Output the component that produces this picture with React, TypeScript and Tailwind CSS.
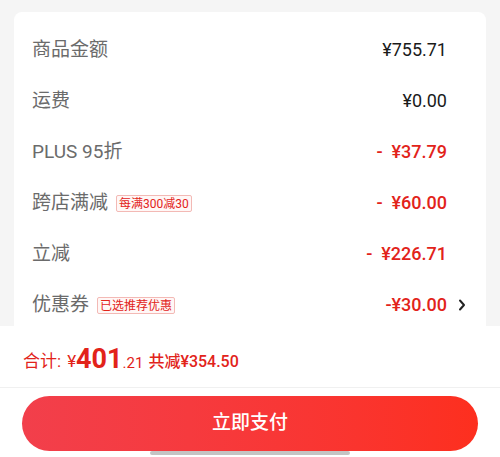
import React from "react"

const rows = [
  { label: "商品金额", value: "¥755.71", red: false },
  { label: "运费", value: "¥0.00", red: false },
  { label: "PLUS 95折", value: "-  ¥37.79", red: true },
  { label: "跨店满减", tag: "每满300减30", value: "-  ¥60.00", red: true },
  { label: "立减", value: "-  ¥226.71", red: true },
  { label: "优惠券", tag: "已选推荐优惠", value: "-¥30.00", red: true, arrow: true },
]

export default function App() {
  return (
    <div className="relative w-[500px] h-[457px] bg-[#f5f5f5] flex flex-col overflow-hidden font-['Roboto','Noto_Sans_CJK_SC',sans-serif]">
      {/* --- Price card --- */}
      <div className="flex-1 overflow-hidden pt-3 px-[14px]">
        <div className="bg-white rounded-lg pt-3 pl-[18px] pr-[18px] pb-4">
          {rows.map((r) => (
            <div key={r.label} className="h-[51px] flex items-center">
              <div className="flex items-center flex-1 pt-[2px]">
                <span className="text-[19px] text-[#6b6b6b]">{r.label}</span>
                {r.tag && (
                  <span className="ml-2 px-[2px] h-[17px] leading-[16px] text-[12px] text-[#e2231a] border border-[#f3b9b5] bg-[#fff7f6] rounded-[2px]">
                    {r.tag}
                  </span>
                )}
              </div>
              <span className={"text-[18px] whitespace-pre " + (r.red ? "text-[#e2231a] font-medium" : "text-[#1a1a1a]")}>
                {r.value}
              </span>
              <div className="w-[21px] flex items-center">
                {r.arrow && (
                  <svg width="8" height="12" viewBox="0 0 8 12" className="ml-[11px]">
                    <path d="M2 1.5 L6 6 L2 10.5" fill="none" stroke="#222" strokeWidth="2" strokeLinecap="round" strokeLinejoin="round" />
                  </svg>
                )}
              </div>
            </div>
          ))}
        </div>
      </div>

      {/* --- Bottom bar --- */}
      <div className="bg-white h-[131px] flex flex-col">
        <div className="h-[62px] flex items-end pb-[13px] pl-[23px] text-[#e2231a] border-b border-[#f0f0f0]">
          <span className="text-[17px]">合计:</span>
          <span className="text-[17px] ml-[6px]">¥</span>
          <span className="text-[27px] font-bold leading-[29px]">401</span>
          <span className="text-[15px]">.21</span>
          <span className="text-[16px] ml-[5px] font-medium">共减¥354.50</span>
        </div>
        <div className="px-[22px] pt-[8px]">
          <button className="w-full h-[55px] rounded-full bg-gradient-to-r from-[#f23f4b] to-[#fd2f1e] text-white text-[19px] font-medium">
            立即支付
          </button>
        </div>
      </div>

      {/* home indicator */}
      <div className="absolute left-[150px] top-[451px] w-[200px] h-[4px] rounded-full bg-[#c4c4c4]"></div>
    </div>
  )
}
